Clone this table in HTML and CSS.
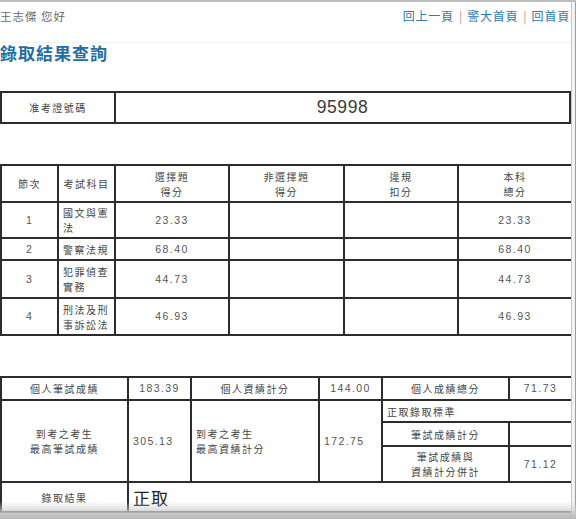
FILE: index.html
```html
<!DOCTYPE html>
<html lang="zh-Hant">
<head>
<meta charset="utf-8">
<title>錄取結果查詢</title>
<link rel="stylesheet" href="styles.css">
</head>
<body>
<div class="page">
  <div class="header">
    <span class="greet">王志傑 您好</span>
    <nav class="links"><a class="link">回上一頁</a><span class="sep">|</span><a class="link">警大首頁</a><span class="sep">|</span><a class="link">回首頁</a></nav>
  </div>
  <h1 class="title">錄取結果查詢</h1>

  <table class="grid t1">
    <colgroup><col class="w114"><col></colgroup>
    <tr class="h31">
      <td class="c">准考證號碼</td>
      <td class="c big">95998</td>
    </tr>
  </table>

  <table class="grid t2">
    <colgroup><col class="w57"><col class="w57"><col class="w114"><col class="w115"><col class="w114"><col class="w114"></colgroup>
    <tr class="h37">
      <td class="c">節次</td>
      <td class="c">考試科目</td>
      <td class="c">選擇題<br>得分</td>
      <td class="c">非選擇題<br>得分</td>
      <td class="c">違規<br>扣分</td>
      <td class="c">本科<br>總分</td>
    </tr>
    <tr class="h36">
      <td class="c num">1</td><td class="l">國文與憲法</td><td class="c num">23.33</td><td></td><td></td><td class="c num">23.33</td>
    </tr>
    <tr class="h22">
      <td class="c num">2</td><td class="l">警察法規</td><td class="c num">68.40</td><td></td><td></td><td class="c num">68.40</td>
    </tr>
    <tr class="h38">
      <td class="c num">3</td><td class="l">犯罪偵查實務</td><td class="c num">44.73</td><td></td><td></td><td class="c num">44.73</td>
    </tr>
    <tr class="h37">
      <td class="c num">4</td><td class="l">刑法及刑事訴訟法</td><td class="c num">46.93</td><td></td><td></td><td class="c num">46.93</td>
    </tr>
  </table>

  <table class="grid t3">
    <colgroup><col class="w127"><col class="w63"><col class="w128"><col class="w63"><col class="w127"><col class="w63"></colgroup>
    <tr class="h23">
      <td class="c">個人筆試成績</td>
      <td class="c num">183.39</td>
      <td class="c">個人資績計分</td>
      <td class="c num">144.00</td>
      <td class="c">個人成績總分</td>
      <td class="c num">71.73</td>
    </tr>
    <tr class="h22">
      <td class="c" rowspan="3">到考之考生<br>最高筆試成績</td>
      <td class="l num" rowspan="3">305.13</td>
      <td class="l" rowspan="3">到考之考生<br>最高資績計分</td>
      <td class="l num" rowspan="3">172.75</td>
      <td class="l" colspan="2">正取錄取標準</td>
    </tr>
    <tr class="h24">
      <td class="c">筆試成績計分</td>
      <td></td>
    </tr>
    <tr class="h36">
      <td class="c">筆試成績與<br>資績計分併計</td>
      <td class="c num">71.12</td>
    </tr>
    <tr class="h30">
      <td class="c">錄取結果</td>
      <td class="l result" colspan="5">正取</td>
    </tr>
  </table>

  <div class="edge-right"></div>
  <div class="edge-bottom"></div>
</div>
</body>
</html>
```

FILE: styles.css
```css
html, body {
  margin: 0;
  padding: 0;
  background: #ffffff;
}

body {
  font-family: "Liberation Sans", "Noto Sans CJK TC", sans-serif;
  color: #444;
}

.page {
  position: relative;
  width: 576px;
  height: 517px;
  border-top: 2px solid #bdbdbd;
  overflow: hidden;
}

.header {
  display: flex;
  justify-content: space-between;
  align-items: flex-start;
  width: 571px;
  height: 41px;
  padding-top: 6px;
  box-sizing: border-box;
  border-bottom: 1px solid #f1f1f1;
}

.greet {
  font-family: "Noto Sans CJK TC", sans-serif;
  font-size: 11.5px;
  line-height: 16px;
  letter-spacing: 1px;
  color: #6a6a6a;
}

.links {
  display: flex;
  align-items: center;
  gap: 5px;
  font-family: "Noto Sans CJK TC", sans-serif;
  font-size: 12px;
  line-height: 16px;
  padding-right: 1px;
}

.link {
  color: #2e7ab4;
  letter-spacing: 0.8px;
}

.sep {
  color: #9a9a9a;
  font-size: 12px;
}

.title {
  margin: 0;
  font-family: "Noto Sans CJK TC", sans-serif;
  font-size: 17px;
  line-height: 20px;
  font-weight: 700;
  letter-spacing: 1px;
  color: #1f6ea6;
}

.grid {
  width: 571px;
  table-layout: fixed;
  border-collapse: collapse;
  border: 2px solid #a0a0a0;
}

.grid td {
  border: 2px solid #2c2c2c;
  padding: 0;
  font-family: "Noto Sans CJK TC", sans-serif;
  font-size: 10px;
  line-height: 15px;
  letter-spacing: 1.5px;
  color: #454545;
  vertical-align: middle;
}

.t1 { margin-top: 28px; }
.t2 { margin-top: 40px; }
.t3 { margin-top: 40px; }

.w57 { width: 57px; }
.w63 { width: 63px; }
.w114 { width: 114px; }
.w115 { width: 115px; }
.w127 { width: 127px; }
.w128 { width: 128px; }

.h22 { height: 22px; }
.h23 { height: 23px; }
.h24 { height: 24px; }
.h30 { height: 30px; }
.h31 { height: 31px; }
.h36 { height: 36px; }
.h37 { height: 37px; }
.h38 { height: 38px; }

.grid td.c { text-align: center; }
.grid td.l { text-align: left; padding-left: 4px; }

.grid td.num {
  font-family: "Liberation Sans", sans-serif;
  font-size: 10.5px;
  letter-spacing: 1.4px;
  color: #555;
}

.grid td.big {
  font-family: "Liberation Sans", sans-serif;
  font-size: 17.5px;
  letter-spacing: 0.6px;
  color: #3a3a3a;
}

.grid td.result {
  font-size: 17px;
  letter-spacing: 1px;
  color: #222;
}

.edge-right {
  position: absolute;
  top: 0;
  right: 0;
  width: 3px;
  height: 100%;
  border-left: 1px solid #c8c8c8;
  border-right: 1px solid #9c9c9c;
  background: #f3f3f3;
}

.edge-bottom {
  position: absolute;
  left: 0;
  right: 0;
  bottom: 0;
  height: 18px;
  background: linear-gradient(to bottom, rgba(210, 210, 210, 0) 0%, rgba(205, 205, 205, 0.55) 45%, #c4c4c4 75%, #b9b9b9 100%);
}
```
